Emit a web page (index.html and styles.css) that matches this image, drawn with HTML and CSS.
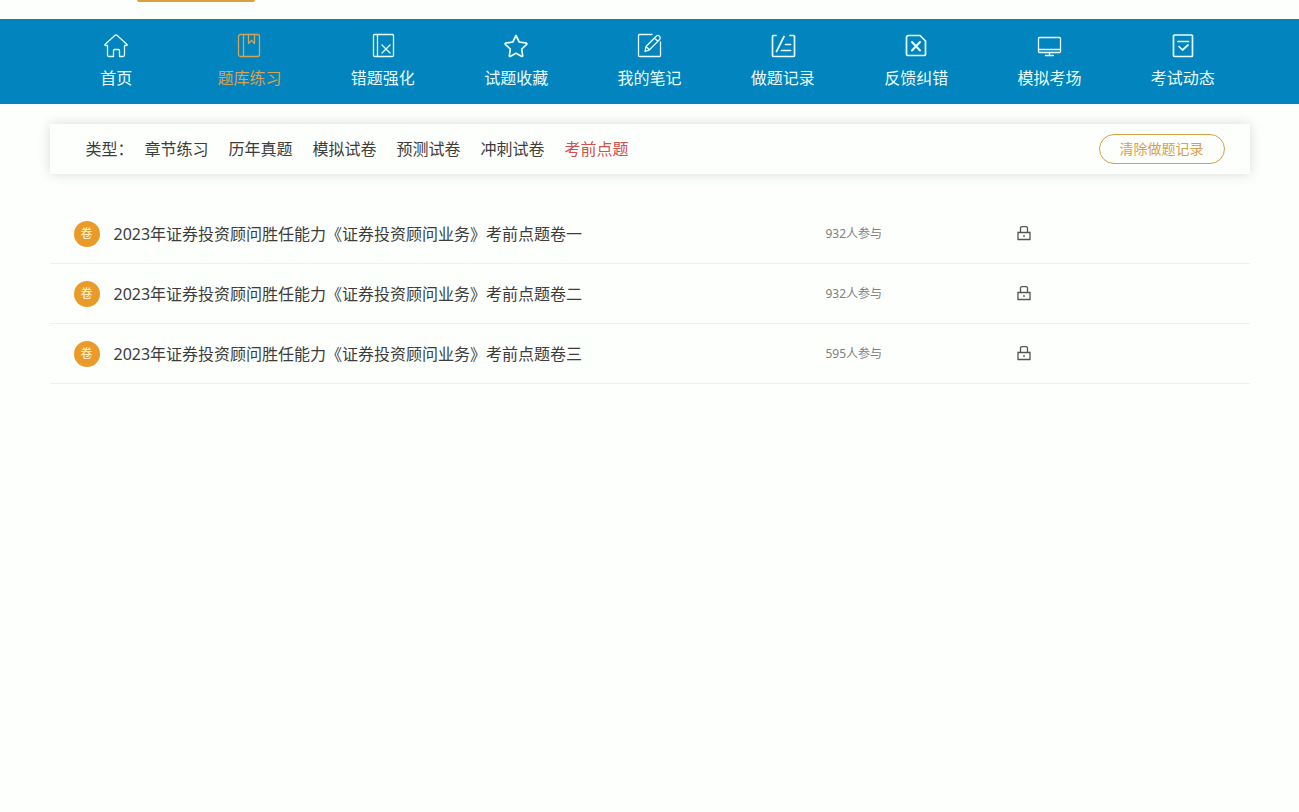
FILE: index.html
```html
<!DOCTYPE html>
<html lang="zh-CN">
<head>
<meta charset="utf-8">
<meta name="viewport" content="width=device-width, initial-scale=1">
<title>题库练习</title>
<link rel="stylesheet" href="styles.css">
</head>
<body>
<header class="topbar"><div class="container"><div class="subject-pill"></div></div></header>
<nav class="nav">
  <div class="container nav-list">
    <a class="nav-item" href="#"><svg class="nav-icon" viewBox="0 0 26 26"><path d="M4.500 12.500H2.800Q1.200 12.500 2.300 11.300L12 2.300Q13 1.400 14 2.300L23.700 11.300Q24.800 12.500 23.200 12.500H21.500V22Q21.500 23.500 20 23.500H16.500V17.500Q16.500 16.500 15.500 16.500H11.500Q10.500 16.500 10.500 17.500V23.500H6Q4.500 23.500 4.500 22Z"/></svg><span>首页</span></a>
    <a class="nav-item active" href="#"><svg class="nav-icon" viewBox="0 0 26 26"><rect x="2.500" y="1.500" width="21" height="22" rx="2"/><path d="M7.500 1.500V23.500M12.500 1.500V10.500L15.500 7.500L18.500 10.500V1.500"/></svg><span>题库练习</span></a>
    <a class="nav-item" href="#"><svg class="nav-icon" viewBox="0 0 26 26"><rect x="3.500" y="1.500" width="20" height="22" rx="1"/><path d="M7.500 1.500V23.500M12 12L20 20M20 12L12 20"/></svg><span>错题强化</span></a>
    <a class="nav-item" href="#"><svg class="nav-icon bold" viewBox="0 0 26 26"><path d="M13 2.500L16.200 9L23.500 10.200Q24.300 10.600 23.700 11.300L18.700 16L19.700 23Q19.500 23.700 18.800 23.400L13 20.300L7.200 23.400Q6.500 23.700 6.300 23L7.300 16L2.300 11.300Q1.700 10.600 2.500 10.200L9.800 9Z"/></svg><span>试题收藏</span></a>
    <a class="nav-item" href="#"><svg class="nav-icon" viewBox="0 0 26 26"><path d="M16 1.500H3.500Q2.500 1.500 2.500 2.500V22.500Q2.500 23.500 3.500 23.500H23.500Q24.500 23.500 24.500 22.500V9"/><path d="M9 18.500L10 13.500L20.500 3Q22 1.800 23.500 3.200Q25 4.700 23.800 6.200L13.500 16.800ZM18.500 5L21.700 8.200M10 13.500L13.500 16.800"/></svg><span>我的笔记</span></a>
    <a class="nav-item" href="#"><svg class="nav-icon bold" viewBox="0 0 26 26"><path d="M6 2.500H3.500Q2.500 2.500 2.500 3.500V22.500Q2.500 23.500 3.500 23.500H23.500Q24.500 23.500 24.500 22.500V3.500Q24.500 2.500 23.500 2.500H20M14 3.500L6.500 18.500M15.500 11.500H20.500M11.500 17.500H20.500"/></svg><span>做题记录</span></a>
    <a class="nav-item" href="#"><svg class="nav-icon bold" viewBox="0 0 26 26"><path d="M5.500 2.500H17L22.500 8V21.500Q22.500 22.500 21.500 22.500H5.500Q3.500 22.500 3.500 21V4.500Q3.500 2.500 5.500 2.500Z"/><path class="cross" d="M9 9L17 17.500M17 9L9 17.500"/></svg><span>反馈纠错</span></a>
    <a class="nav-item" href="#"><svg class="nav-icon" viewBox="0 0 26 26"><rect x="2.500" y="4.500" width="22" height="15" rx="1"/><path d="M2.500 16.500H24.500M13.500 19.500V22.500M9.500 22.500H17.500"/></svg><span>模拟考场</span></a>
    <a class="nav-item" href="#"><svg class="nav-icon bold" viewBox="0 0 26 26"><rect x="3.500" y="2" width="19" height="21.500" rx="1"/><path d="M8 8.500H18.500M9 13.500L12.500 17L18 12"/></svg><span>考试动态</span></a>
  </div>
</nav>
<main class="container">
  <section class="filter">
    <span class="filter-label">类型：</span>
    <div class="filter-links">
      <a href="#">章节练习</a><a href="#">历年真题</a><a href="#">模拟试卷</a><a href="#">预测试卷</a><a href="#">冲刺试卷</a><a class="current" href="#">考前点题</a>
    </div>
    <button class="clear-btn" type="button">清除做题记录</button>
  </section>
  <ul class="papers">
    <li class="paper"><span class="badge">卷</span><a class="title" href="#">2023年证券投资顾问胜任能力《证券投资顾问业务》考前点题卷一</a><span class="count">932人参与</span><svg class="lock" viewBox="0 0 16 16"><path d="M4.500 6.500V2Q4.500 0.700 6 0.700H10Q11.500 0.700 11.500 2V6.500M2 6.500H14V13.500H2ZM8 9V11"/></svg></li>
    <li class="paper"><span class="badge">卷</span><a class="title" href="#">2023年证券投资顾问胜任能力《证券投资顾问业务》考前点题卷二</a><span class="count">932人参与</span><svg class="lock" viewBox="0 0 16 16"><path d="M4.500 6.500V2Q4.500 0.700 6 0.700H10Q11.500 0.700 11.500 2V6.500M2 6.500H14V13.500H2ZM8 9V11"/></svg></li>
    <li class="paper"><span class="badge">卷</span><a class="title" href="#">2023年证券投资顾问胜任能力《证券投资顾问业务》考前点题卷三</a><span class="count">595人参与</span><svg class="lock" viewBox="0 0 16 16"><path d="M4.500 6.500V2Q4.500 0.700 6 0.700H10Q11.500 0.700 11.500 2V6.500M2 6.500H14V13.500H2ZM8 9V11"/></svg></li>
  </ul>
</main>
</body>
</html>
```
FILE: styles.css
```css
* {
  box-sizing: border-box;
}

body {
  margin: 0;
  background: #fdfffc;
  color: #3c3c3c;
  font-family: "Noto Sans", "Noto Sans CJK SC", sans-serif;
  font-size: 16px;
  line-height: 24px;
}

a {
  color: inherit;
  text-decoration: none;
}

.container {
  max-width: 1200px;
  margin: 0 auto;
}

.topbar {
  height: 19px;
}

.subject-pill {
  width: 118px;
  height: 2px;
  margin-left: 87px;
  border-bottom: 2px solid #dba03c;
  border-radius: 0 0 6px 6px;
}

.nav {
  background: #0284bf;
  color: #e9ffff;
}

.nav-list {
  display: grid;
  grid-template-columns: repeat(9, 1fr);
}

.nav-item {
  display: flex;
  flex-direction: column;
  align-items: center;
  gap: 7px;
  padding: 14px 0;
}

.nav-item.active {
  color: #d3a356;
}

.nav-icon {
  width: 26px;
  height: 26px;
  fill: none;
  stroke: currentColor;
  stroke-width: 1.3;
  stroke-linecap: round;
  stroke-linejoin: round;
}

.nav-icon.bold {
  stroke-width: 1.7;
}

.nav-icon .cross {
  stroke-width: 2;
}

.filter {
  display: flex;
  align-items: center;
  height: 50px;
  margin-top: 20px;
  padding: 0 25px 0 36px;
  background: #fdfffd;
  box-shadow: 0 0 12px rgba(0, 0, 0, 0.14);
}

.filter-links {
  display: flex;
  gap: 20px;
  margin-left: 11px;
}

.filter-links .current {
  color: #d2504f;
}

.clear-btn {
  height: 30px;
  margin-left: auto;
  padding: 0 20px;
  border: 1px solid #d3a045;
  border-radius: 15px;
  background: transparent;
  color: #d9a04e;
  font: inherit;
  font-size: 14px;
}

.papers {
  margin: 30px 0 0;
  padding: 0;
  list-style: none;
}

.paper {
  display: grid;
  grid-template-columns: 26px 1fr 190px 234px;
  align-items: center;
  height: 60px;
  padding-left: 24px;
  border-bottom: 1px solid #edf0ee;
}

.badge {
  width: 26px;
  height: 26px;
  border-radius: 50%;
  background: #ea9a28;
  color: #fff8e6;
  font-size: 12px;
  line-height: 26px;
  text-align: center;
}

.title {
  padding-left: 14px;
}

.count {
  color: #808080;
  font-size: 12px;
}

.lock {
  width: 16px;
  height: 16px;
  fill: none;
  stroke: #555;
  stroke-width: 1.3;
}
```
